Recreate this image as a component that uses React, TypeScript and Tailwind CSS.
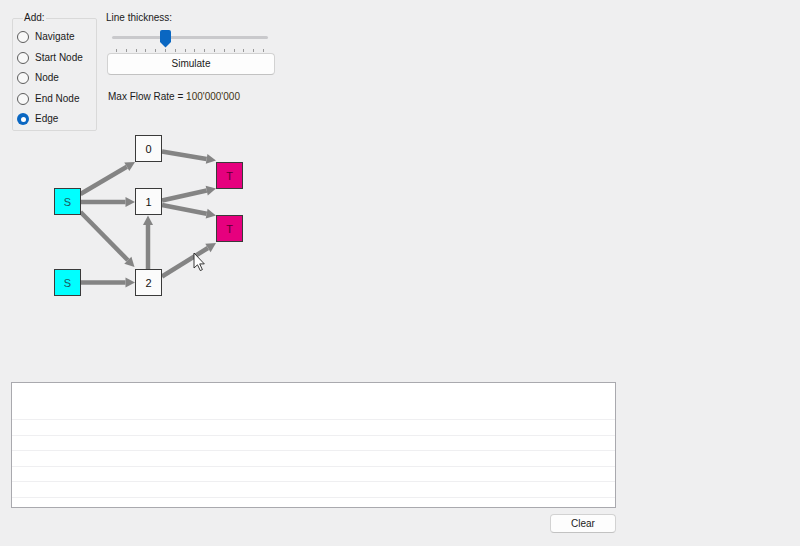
import React from 'react';

type GraphNode = { label: string; x: number; y: number; kind: 'start' | 'mid' | 'end' };

// node boxes in page coordinates (the svg viewBox starts at y=131)
const nodes: GraphNode[] = [
  { label: 'S', x: 54, y: 188, kind: 'start' },
  { label: 'S', x: 54, y: 269, kind: 'start' },
  { label: '0', x: 135, y: 135, kind: 'mid' },
  { label: '1', x: 135, y: 188, kind: 'mid' },
  { label: '2', x: 135, y: 269, kind: 'mid' },
  { label: 'T', x: 216, y: 162, kind: 'end' },
  { label: 'T', x: 216, y: 215, kind: 'end' },
];

// [fromX, fromY, tipX, tipY]
const edges: [number, number, number, number][] = [
  [80.5, 194, 135, 162],
  [81, 202, 135, 202],
  [80.5, 212, 134.5, 267],
  [81, 282.5, 135, 282.5],
  [148, 269, 148, 215.5],
  [162, 151.5, 216, 160.5],
  [162, 200.5, 216, 188.5],
  [162, 205, 216, 215.5],
  [162, 276.5, 216, 243],
];

const radios = ['Navigate', 'Start Node', 'Node', 'End Node', 'Edge'];

const Arrow: React.FC<{ e: [number, number, number, number] }> = ({ e }) => {
  const [x1, y1, x2, y2] = e;
  const len = Math.hypot(x2 - x1, y2 - y1);
  const ux = (x2 - x1) / len;
  const uy = (y2 - y1) / len;
  const bx = x2 - ux * 9.5;
  const by = y2 - uy * 9.5;
  const px = -uy * 5;
  const py = ux * 5;
  return (
    <g>
      <line x1={x1} y1={y1} x2={bx} y2={by} stroke="#848484" strokeWidth={4.5} />
      <polygon points={`${x2},${y2} ${bx + px},${by + py} ${bx - px},${by - py}`} fill="#848484" />
    </g>
  );
};

const Graph: React.FC = () => (
  <svg width={800} height={251} viewBox="0 131 800 251" className="block">
    {edges.map((e, i) => (
      <Arrow key={i} e={e} />
    ))}
    {nodes.map((n, i) => {
      const fill = n.kind === 'start' ? '#00ffff' : n.kind === 'end' ? '#e6007e' : '#fbfbfb';
      const color = n.kind === 'start' ? '#1d5a60' : n.kind === 'end' ? '#5c0030' : '#111111';
      return (
        <g key={i}>
          <rect x={n.x + 0.5} y={n.y + 0.5} width={26} height={26} fill={fill} stroke="#3a3a3a" strokeWidth={1} />
          <text
            x={n.x + 13.5}
            y={n.y + 17.5}
            textAnchor="middle"
            fontSize={11}
            fill={color}
            fontFamily="'Liberation Sans', Arial, sans-serif"
          >
            {n.label}
          </text>
        </g>
      );
    })}
    {/* mouse pointer */}
    <path
      d="M194 253 L194 268 L197.5 264.8 L200.3 270.6 L202.4 269.6 L199.7 263.9 L204.3 263.9 Z"
      fill="#ffffff"
      stroke="#222222"
      strokeWidth={0.9}
      strokeLinejoin="round"
    />
  </svg>
);

export default function App() {
  return (
    <div
      className="w-[800px] h-[546px] overflow-hidden bg-[#efeff0] text-[10px] text-[#1a1a1a]"
      style={{ fontFamily: "'Liberation Sans', Arial, sans-serif" }}
    >
      {/* top controls */}
      <div className="flex pt-[12px] pl-[12px]">
        <fieldset className="w-[85px] h-[119px] border border-[#d9d9d9] rounded-[2px] pl-[4px] pt-[3px]">
          <legend className="ml-[6px] px-[1px] leading-[12px]">Add:</legend>
          <div className="flex flex-col">
            {radios.map((r) => {
              const checked = r === 'Edge';
              return (
                <div key={r} className="flex items-center h-[20.5px]">
                  {checked ? (
                    <span className="w-[12px] h-[12px] rounded-full bg-[#0a67c2] flex items-center justify-center">
                      <span className="w-[5px] h-[5px] rounded-full bg-white" />
                    </span>
                  ) : (
                    <span className="w-[12px] h-[12px] rounded-full border border-[#5c5c5c] bg-[#f8f8f8]" />
                  )}
                  <span className="ml-[6px] leading-[12px]">{r}</span>
                </div>
              );
            })}
          </div>
        </fieldset>

        <div className="ml-[9px] flex flex-col">
          <div className="leading-[12px] h-[12px]">Line thickness:</div>

          {/* slider */}
          <div className="relative h-[29px] w-[169px]">
            <div className="ml-[6px] mt-[11.5px] w-[156px] h-[3px] rounded-full bg-[#c9c9cc]" />
            <svg width={11} height={18} className="absolute left-[54px] top-[6px]">
              <path
                d="M2 0 H9 A2 2 0 0 1 11 2 V12 L5.5 17.5 L0 12 V2 A2 2 0 0 1 2 0 Z"
                fill="#0a67c2"
              />
            </svg>
            <div className="ml-[10px] mt-[10px] w-[148px] flex justify-between">
              {Array.from({ length: 16 }).map((_, i) => (
                <span key={i} className="w-[1px] h-[3px] bg-[#9a9a9a]" />
              ))}
            </div>
          </div>

          <button className="ml-[1px] w-[168px] h-[22px] rounded-[4px] border border-[#d2d2d2] border-b-[#c2c2c2] bg-[#fdfdfd] leading-[12px]">
            Simulate
          </button>

          <div className="ml-[2px] mt-[16px] leading-[12px]">
            Max Flow Rate = <span className="text-[#3f3415]">100'000'000</span>
          </div>
        </div>
      </div>

      {/* drawing canvas */}
      <Graph />

      {/* result list */}
      <div className="ml-[11px] w-[605px] h-[126px] border border-[#a9a9ae] bg-white overflow-hidden">
        <div className="h-[37px] border-b border-[#efeff1]" />
        {Array.from({ length: 5 }).map((_, i) => (
          <div key={i} className="h-[15.5px] border-b border-[#efeff1]" />
        ))}
      </div>

      <div className="w-[616px] flex justify-end mt-[6px]">
        <button className="w-[66px] h-[19px] rounded-[4px] border border-[#d2d2d2] border-b-[#c2c2c2] bg-[#fdfdfd] leading-[12px]">
          Clear
        </button>
      </div>
    </div>
  );
}
